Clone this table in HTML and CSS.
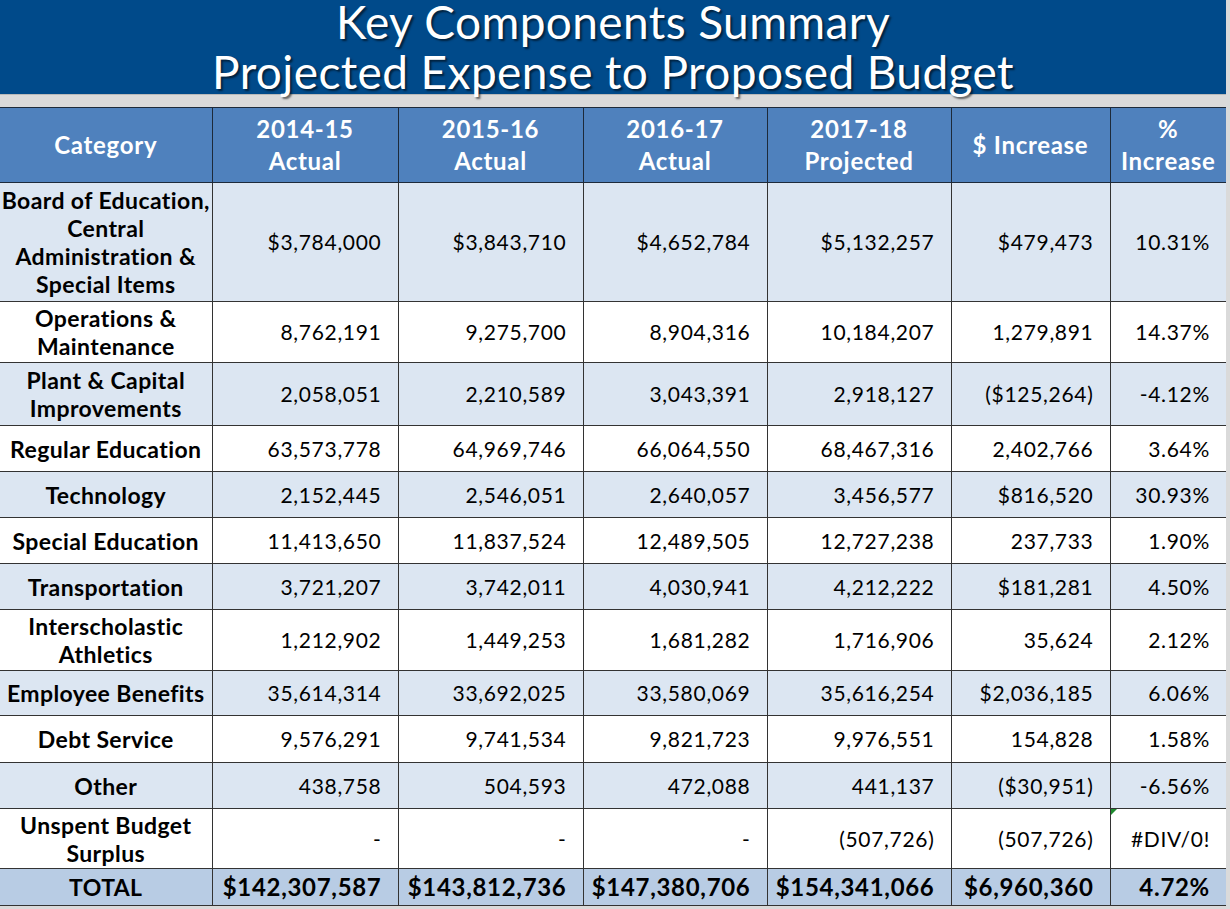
FILE: index.html
```html
<!DOCTYPE html>
<html lang="en">
<head>
<meta charset="utf-8">
<title>Key Components Summary</title>
<link rel="stylesheet" href="styles.css">
</head>
<body>
<div class="page">
  <header class="banner">
    <h1 class="title"><span>Key Components Summary</span><span>Projected Expense to Proposed Budget</span></h1>
  </header>
  <table class="summary">
    <colgroup>
      <col class="c-cat"><col class="c-y1"><col class="c-y2"><col class="c-y3"><col class="c-y4"><col class="c-inc"><col class="c-pct">
    </colgroup>
    <thead>
      <tr class="r-head">
        <th>Category</th>
        <th>2014-15<br>Actual</th>
        <th>2015-16<br>Actual</th>
        <th>2016-17<br>Actual</th>
        <th>2017-18<br>Projected</th>
        <th>$ Increase</th>
        <th>%<br>Increase</th>
      </tr>
    </thead>
    <tbody>
      <tr class="r-4 alt">
        <th>Board of Education,<br>Central<br>Administration &amp;<br>Special Items</th>
        <td>$3,784,000</td><td>$3,843,710</td><td>$4,652,784</td><td>$5,132,257</td><td>$479,473</td><td>10.31%</td>
      </tr>
      <tr class="r-2">
        <th>Operations &amp;<br>Maintenance</th>
        <td>8,762,191</td><td>9,275,700</td><td>8,904,316</td><td>10,184,207</td><td>1,279,891</td><td>14.37%</td>
      </tr>
      <tr class="r-2b alt">
        <th>Plant &amp; Capital<br>Improvements</th>
        <td>2,058,051</td><td>2,210,589</td><td>3,043,391</td><td>2,918,127</td><td>($125,264)</td><td>-4.12%</td>
      </tr>
      <tr class="r-1">
        <th>Regular Education</th>
        <td>63,573,778</td><td>64,969,746</td><td>66,064,550</td><td>68,467,316</td><td>2,402,766</td><td>3.64%</td>
      </tr>
      <tr class="r-1 alt">
        <th>Technology</th>
        <td>2,152,445</td><td>2,546,051</td><td>2,640,057</td><td>3,456,577</td><td>$816,520</td><td>30.93%</td>
      </tr>
      <tr class="r-1">
        <th>Special Education</th>
        <td>11,413,650</td><td>11,837,524</td><td>12,489,505</td><td>12,727,238</td><td>237,733</td><td>1.90%</td>
      </tr>
      <tr class="r-1 alt">
        <th>Transportation</th>
        <td>3,721,207</td><td>3,742,011</td><td>4,030,941</td><td>4,212,222</td><td>$181,281</td><td>4.50%</td>
      </tr>
      <tr class="r-2">
        <th>Interscholastic<br>Athletics</th>
        <td>1,212,902</td><td>1,449,253</td><td>1,681,282</td><td>1,716,906</td><td>35,624</td><td>2.12%</td>
      </tr>
      <tr class="r-1s alt">
        <th>Employee Benefits</th>
        <td>35,614,314</td><td>33,692,025</td><td>33,580,069</td><td>35,616,254</td><td>$2,036,185</td><td>6.06%</td>
      </tr>
      <tr class="r-1l">
        <th>Debt Service</th>
        <td>9,576,291</td><td>9,741,534</td><td>9,821,723</td><td>9,976,551</td><td>154,828</td><td>1.58%</td>
      </tr>
      <tr class="r-1 alt">
        <th>Other</th>
        <td>438,758</td><td>504,593</td><td>472,088</td><td>441,137</td><td>($30,951)</td><td>-6.56%</td>
      </tr>
      <tr class="r-2s">
        <th>Unspent Budget<br>Surplus</th>
        <td>-</td><td>-</td><td>-</td><td>(507,726)</td><td>(507,726)</td><td class="flag">#DIV/0!</td>
      </tr>
    </tbody>
    <tfoot>
      <tr class="r-total">
        <th>TOTAL</th>
        <td>$142,307,587</td><td>$143,812,736</td><td>$147,380,706</td><td>$154,341,066</td><td>$6,960,360</td><td>4.72%</td>
      </tr>
    </tfoot>
  </table>
</div>
</body>
</html>
```

FILE: styles.css
```css
html, body {
  margin: 0;
  padding: 0;
  background: #dadada;
}

.page {
  width: 1226px;
  font-family: "Lato", "Liberation Sans", sans-serif;
  color: #000;
}

.banner {
  height: 95px;
  background: #004a8a;
  display: flex;
  align-items: flex-start;
  justify-content: center;
  margin-bottom: 12px;
  border-bottom: 1px solid #b9b9b9;
  box-sizing: border-box;
}

.title {
  margin: -3px 0 0;
  display: flex;
  flex-direction: column;
  align-items: center;
  color: #fff;
  font-weight: 400;
  font-size: 46px;
  line-height: 50px;
  text-shadow: 2px 2px 2px rgba(0, 0, 0, 0.55);
  letter-spacing: 0.4px;
}

.summary {
  width: 1226px;
  table-layout: fixed;
  border-collapse: collapse;
  font-size: 21px;
  letter-spacing: 0.7px;
  background: #fff;
}

.c-cat { width: 212px; }
.c-y1 { width: 186px; }
.c-y2 { width: 185px; }
.c-y3 { width: 184px; }
.c-y4 { width: 184px; }
.c-inc { width: 159px; }
.c-pct { width: 116px; }

.summary th,
.summary td {
  border: 1.5px solid #333;
  padding: 0 16px 0 2px;
  line-height: 28px;
  white-space: nowrap;
}

.summary tr > :first-child { border-left: none; }
.summary tr > :last-child { border-right: none; }

.summary thead th {
  background: #4f81bd;
  color: #fff;
  font-weight: 700;
  text-align: center;
  padding: 0 1px;
  line-height: 32px;
  font-size: 24px;
  letter-spacing: 0.7px;
  border-color: #1d2a3a;
}

.summary tbody th,
.summary tfoot th {
  font-weight: 700;
  text-align: center;
  padding: 0 1px;
  font-size: 23px;
  letter-spacing: 0.4px;
}

.summary td {
  text-align: right;
  font-weight: 400;
}

.alt th, .alt td { background: #dce6f2; }

.r-head { height: 75px; }
.r-4 { height: 119px; }
.r-2 { height: 61px; }
.r-2b { height: 63px; }
.r-2s { height: 60px; }
.r-1 { height: 46px; }
.r-1s { height: 45px; }
.r-1l { height: 47px; }

.r-total { height: 37px; }
.r-total th,
.r-total td {
  background: #b8cce4;
  font-weight: 700;
}
.r-total td {
  font-size: 24px;
  letter-spacing: 0.7px;
}
.r-total th {
  font-size: 24px;
}

.flag { position: relative; }
.flag::before {
  content: "";
  position: absolute;
  left: 0;
  top: 0;
  border-top: 6px solid #1e8a2e;
  border-right: 6px solid transparent;
}
```
